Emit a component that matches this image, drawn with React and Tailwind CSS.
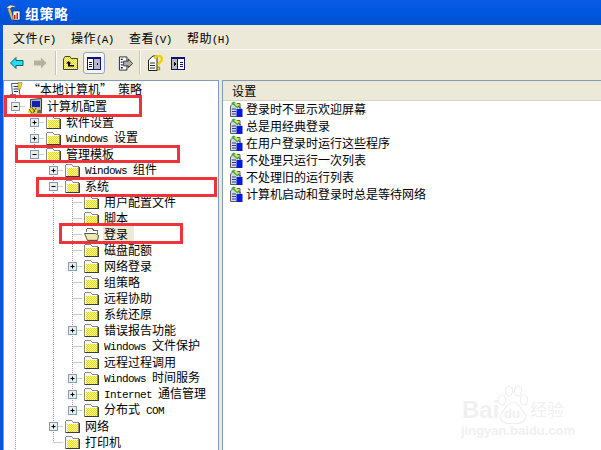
import React from "react";

const FONT = '"Noto Sans CJK SC", "Liberation Sans", sans-serif';

function T({ s }) {
  const parts = s.match(/[\x00-\x7f]+|[^\x00-\x7f]+/g) || [];
  return parts.map((p, i) =>
    /^[\x00-\x7f]/.test(p) ? (
      <span key={i} className="font-['Liberation_Mono',monospace] text-[11px] leading-[14px] tracking-[-0.6px] whitespace-pre">{p}</span>
    ) : (
      <span key={i} className="leading-[14px]">{p}</span>
    )
  );
}

function Dither() {
  return (
    <defs>
      <pattern id="dith" width="2" height="2" patternUnits="userSpaceOnUse">
        <rect width="2" height="2" fill="#fffbb0" />
        <rect width="1" height="1" fill="#f0dc00" />
        <rect x="1" y="1" width="1" height="1" fill="#f0dc00" />
      </pattern>
    </defs>
  );
}

function Folder({ open }) {
  if (open)
    return (
      <svg width="16" height="16" viewBox="0 0 16 16" shapeRendering="crispEdges" className="shrink-0 block">
        <Dither />
        <path d="M2.5 5.5 V3.5 L3.5 2.5 H8.5 L9.5 4.5 H13.5 V8" fill="#fff" stroke="#6a6a60" />
        <path d="M0.5 7.5 H11.5 L14.5 9.5 L13.5 14.5 H3.5 Z" fill="#efe9b0" stroke="#55554c" shapeRendering="auto" />
        <path d="M4 13 H13" stroke="#d8d0a0" />
      </svg>
    );
  return (
    <svg width="15" height="16" viewBox="0 0 15 16" shapeRendering="crispEdges" className="shrink-0 block">
      <Dither />
      <path d="M0.5 14.5 V3.5 L1.5 2.5 H6.5 L7.5 3.5 L8.5 4.5 H13.5 V14.5 Z" fill="#fbfaf2" stroke="#8a8a80" />
      <rect x="2" y="6" width="11" height="8" fill="url(#dith)" />
      <path d="M1 14.5 H14.5 V5" fill="none" stroke="#3c3c36" />
    </svg>
  );
}

function PolicyRoot() {
  return (
    <svg width="16" height="16" viewBox="0 0 16 16" className="shrink-0 block">
      <path d="M3.5 1.5 H11.5 V11.5 L13 14.5 H6 L4.5 12 Z" fill="#fff" stroke="#555" />
      <path d="M5.5 4.5 H10 M5.5 7 H10 M6 9.5 H10" stroke="#1a2fa0" />
      <path d="M10 0.5 L14 0.5 L12.5 7 L10 8 Z" fill="#f2d820" stroke="#776" strokeWidth=".6" />
      <path d="M2 12.5 H8" stroke="#777" />
    </svg>
  );
}

function Computer() {
  return (
    <svg width="16" height="16" viewBox="0 0 16 16" className="shrink-0 block">
      <path d="M3.5 1.5 L14.5 0.5 V13.5 H3.5 Z" fill="#b4b4ac" stroke="#3c3c3c" />
      <rect x="5" y="3" width="8" height="6" fill="#0c20b8" />
      <rect x="3" y="12" width="12" height="3.5" fill="#66665e" />
      <path d="M1 14 L3 9 L5 12 L7 8.5 L9 12 L11 10 L10 15 H2 Z" fill="#f2e000" />
      <path d="M2 11 L5 15 M5 9.5 L8 14 M9 10 L6 15" stroke="#2a2a2a" strokeWidth=".8" />
    </svg>
  );
}

function Setting() {
  return (
    <svg width="16" height="17" viewBox="0 0 16 17" className="shrink-0 block">
      <path d="M2.5 5 L5 2.5 H12 V15.5 H2.5 Z" fill="#d8d8d4" stroke="#5c5c5c" />
      <path d="M3 2 L6 0.5 L12 5 L9.5 7.5 Z" fill="#35ae55" />
      <path d="M6 2.5 L8 1.5 L11 4.5 L9 5.5 Z" fill="#f2e24a" />
      <path d="M11 5.5 L13 7.5" stroke="#333" />
      <path d="M4 8 H8 M4 10.5 H8 M4 13 H8" stroke="#2038a8" strokeWidth="1.2" />
      <rect x="8.5" y="8" width="6" height="8" fill="#0818dc" />
    </svg>
  );
}

const GUIDES = [
  [1, 99],
  [2, 4],
  [5, 22],
  [7, 20],
];

const ROWS = [
  { c: -1, icon: "root", t: "“本地计算机” 策略" },
  { c: 0, exp: "-", icon: "pc", t: "计算机配置" },
  { c: 1, exp: "+", t: "软件设置" },
  { c: 1, exp: "+", t: "Windows 设置" },
  { c: 1, exp: "-", t: "管理模板", last: true },
  { c: 2, exp: "+", t: "Windows 组件" },
  { c: 2, exp: "-", t: "系统" },
  { c: 3, t: "用户配置文件" },
  { c: 3, t: "脚本" },
  { c: 3, t: "登录", open: true, sel: true },
  { c: 3, t: "磁盘配额" },
  { c: 3, exp: "+", t: "网络登录" },
  { c: 3, t: "组策略" },
  { c: 3, t: "远程协助" },
  { c: 3, t: "系统还原" },
  { c: 3, exp: "+", t: "错误报告功能" },
  { c: 3, t: "Windows 文件保护" },
  { c: 3, t: "远程过程调用" },
  { c: 3, exp: "+", t: "Windows 时间服务" },
  { c: 3, exp: "+", t: "Internet 通信管理" },
  { c: 3, exp: "+", t: "分布式 COM", last: true },
  { c: 2, exp: "+", t: "网络" },
  { c: 2, t: "打印机", last: true },
];

function Cell({ kind, exp, last }) {
  const dot = { stroke: "#9a9a9a", strokeDasharray: "1 1", fill: "none" };
  return (
    <svg width="19" height="16" viewBox="0 0 19 16" className="shrink-0 block">
      {kind === "v" && <path d="M9.5 0 V16" {...dot} />}
      {kind === "c" && (
        <>
          <path d={last ? "M9.5 0 V8" : "M9.5 0 V16"} {...dot} />
          <path d="M9.5 8.5 H19" {...dot} />
          {exp && (
            <>
              <rect x="5.5" y="4.5" width="8" height="8" fill="#eeece6" stroke="#7f9db9" />
              <path d="M7.5 8.5 H11.5" stroke="#000" />
              {exp === "+" && <path d="M9.5 6.5 V10.5" stroke="#000" />}
            </>
          )}
        </>
      )}
    </svg>
  );
}

function TreeRow({ r, i }) {
  const cells = [];
  for (let k = 0; k <= r.c; k++) {
    if (k === r.c) cells.push(<Cell key={k} kind="c" exp={r.exp} last={r.last} />);
    else cells.push(<Cell key={k} kind={i >= GUIDES[k][0] && i <= GUIDES[k][1] ? "v" : ""} />);
  }
  return (
    <div className="flex items-center h-[16px] whitespace-nowrap">
      {cells}
      <div className="w-[19px] h-[16px] shrink-0 flex items-start justify-center">
        {r.icon === "root" ? <PolicyRoot /> : r.icon === "pc" ? <Computer /> : <Folder open={r.open} />}
      </div>
      <div className={"ml-[2px] px-[1px] h-[16px] pb-[1px] flex items-center text-[12px] leading-[14px] " + (r.sel ? "bg-[#ece9d8] pr-[6px]" : "")}>
        <div className="leading-[14px]"><T s={r.t} /></div>
      </div>
    </div>
  );
}

const SETTINGS = [
  "登录时不显示欢迎屏幕",
  "总是用经典登录",
  "在用户登录时运行这些程序",
  "不处理只运行一次列表",
  "不处理旧的运行列表",
  "计算机启动和登录时总是等待网络",
];

function Sep() {
  return <div className="w-[1px] h-[24px] bg-[#c8c5b4] border-r border-white box-content" />;
}

function PaneIcon({ flip }) {
  return (
    <svg width="14" height="13" viewBox="0 0 14 13" className="block" shapeRendering="crispEdges">
      <rect x="0.5" y="0.5" width="13" height="12" fill="#fff" stroke="#10107a" />
      <rect x="0" y="0" width="14" height="2" fill="#10107a" />
      {flip ? (
        <>
          <rect x="1" y="2" width="6" height="10" fill="#b8b8c4" />
          <path d="M3 5 L5 7 L3 9 Z" fill="#000" />
          <path d="M9 5 H12 M9 7 H12 M9 9 H12" stroke="#10107a" />
        </>
      ) : (
        <>
          <path d="M2 5 H5 M2 7 H5 M2 9 H5" stroke="#10107a" />
          <rect x="7" y="2" width="6" height="10" fill="#b8b8c4" />
          <path d="M11 5 L9 7 L11 9 Z" fill="#000" />
        </>
      )}
      <path d="M6.5 2 V12" stroke="#10107a" />
    </svg>
  );
}

function Box({ className }) {
  return <div className={"absolute border-[3px] border-[#f0333a] " + className} />;
}

export default function App() {
  return (
    <div style={{ fontFamily: FONT }} className="relative w-[601px] h-[450px] overflow-hidden flex flex-col text-[12px] text-black bg-[#ece9d8]">
      {/* Title bar */}
      <div className="h-[25px] shrink-0 flex items-center pl-[5px] bg-gradient-to-b from-[#0a5ce6] via-[#0056e0] to-[#0250d0]">
        <svg width="16" height="17" viewBox="0 0 16 17" className="shrink-0 block">
          <path d="M1 4 L5 1 L9 1.5 L11 3.5 L7 3 L5 5 Z" fill="#e8e8e0" stroke="#333" strokeWidth=".5" />
          <path d="M4 5 L8 16" stroke="#e8c040" strokeWidth="2.2" />
          <rect x="8" y="7" width="7" height="9" fill="#f4f4f4" stroke="#222" strokeWidth=".6" />
          <rect x="9" y="11" width="1.5" height="4" fill="#c02020" />
          <rect x="11.5" y="9" width="1.5" height="6" fill="#c02020" />
        </svg>
        <span className="ml-[4px] text-white font-bold text-[14px] leading-none tracking-[0.5px]">组策略</span>
      </div>

      <div className="flex-1 flex min-h-0 border-l-[3px] border-[#0855dd]">
        <div className="flex-1 flex flex-col min-w-0">
          {/* Menu */}
          <div className="h-[24px] shrink-0 flex items-center pt-[3px] pl-[10px] gap-[18px] bg-[#ece9d8] text-[12px]">
            {["文件(F)", "操作(A)", "查看(V)", "帮助(H)"].map((m) => (
              <span key={m} className="w-[40px] whitespace-nowrap leading-[14px] tracking-[0.4px]"><T s={m} /></span>
            ))}
          </div>

          {/* Toolbar */}
          <div className="h-[31px] shrink-0 flex items-center pb-[4px] bg-[#ece9d8] border-t border-[#f8f6ee]">
            <svg width="14" height="12" viewBox="0 0 14 12" className="ml-[7px] block">
              <path d="M0.5 6 L6 0.5 V3.5 H13 V8.5 H6 V11.5 Z" fill="#20e0f0" stroke="#106070" />
            </svg>
            <svg width="14" height="12" viewBox="0 0 14 12" className="ml-[9px] block">
              <path d="M13.5 6 L8 0.5 V3.5 H1 V8.5 H8 V11.5 Z" fill="#b4b1a0" />
            </svg>
            <div className="ml-[8px]"><Sep /></div>
            <svg width="15" height="14" viewBox="0 0 15 14" className="ml-[6px] block">
              <Dither />
              <path d="M0.5 3 L2 0.5 H7 L8 2.5 H14.5 V13.5 H0.5 Z" fill="url(#dith)" stroke="#444" />
              <path d="M5.5 5 L3 7.5 H5 V10.5 H11 V9 H7 V7.5 H8.5 Z" fill="#000" />
            </svg>
            <div className="ml-[5px] w-[22px] h-[22px] rounded-[3px] border border-[#8ea6c6] bg-[#f6f5ee] flex items-center justify-center">
              <PaneIcon flip={false} />
            </div>
            <svg width="15" height="15" viewBox="0 0 16 15" className="ml-[13px] block">
              <path d="M1.5 0.5 H9.5 V14.5 H1.5 Z" fill="#fff" stroke="#222" />
              <path d="M3 3 H5 M3 6 H5 M3 9 H5 M3 12 H5" stroke="#10107a" strokeWidth="1.4" />
              <path d="M6 5 H11 V2.5 L15.5 7.5 L11 12 V10 H6 Z" fill="#b0b0a8" stroke="#333" />
            </svg>
            <div className="ml-[6px]"><Sep /></div>
            <svg width="15" height="16" viewBox="0 0 15 16" className="ml-[7px] block">
              <path d="M0.5 5 L5 1 H9 V15.5 H0.5 Z" fill="#fff" stroke="#222" />
              <path d="M2 8 H7 M2 10.5 H7 M2 13 H7" stroke="#333" />
              <path d="M7 4 C7 0 14 0 14 4 C14 7 10.5 6.5 10.5 10" fill="none" stroke="#f2d000" strokeWidth="2.4" />
              <rect x="9.3" y="12" width="2.6" height="3" fill="#f2d000" stroke="#333" strokeWidth=".4" />
            </svg>
            <div className="ml-[8px]"><PaneIcon flip /></div>
          </div>

          {/* Panes */}
          <div className="flex-1 flex min-h-0 bg-[#ece9d8]">
            <div className="w-[216px] shrink-0 bg-white border-t border-r border-l border-[#7f9db9] pl-[2px] pt-[1px] overflow-hidden">
              {ROWS.map((r, i) => (
                <TreeRow key={i} r={r} i={i} />
              ))}
            </div>
            <div className="flex-1 ml-[3px] bg-white border-t border-l border-[#7f9db9] min-w-0">
              <div className="h-[20px] bg-[#ece9d8] border-b border-[#d8d4c4] flex items-center pl-[9px] leading-[14px]">
                <span className="tracking-[0.2px]">设置</span>
              </div>
              <div className="pl-[5px]">
                {SETTINGS.map((s) => (
                  <div key={s} className="h-[17px] flex items-center gap-[2px] whitespace-nowrap leading-[14px] text-[12px]">
                    <Setting />
                    <span className="pb-[1px]">{s}</span>
                  </div>
                ))}
              </div>
            </div>
          </div>
        </div>
      </div>

      {/* Red annotations */}
      <Box className="left-[4px] top-[95px] w-[138px] h-[22px]" />
      <Box className="left-[15px] top-[145px] w-[165px] h-[18px]" />
      <Box className="left-[36px] top-[177px] w-[181px] h-[20px]" />
      <Box className="left-[59px] top-[223px] w-[124px] h-[21px]" />

      {/* Watermark */}
      <div className="absolute left-[460px] top-[385px] w-[110px] text-[#f0f0f0] leading-none">
        <svg width="34" height="42" viewBox="0 0 34 42" className="absolute left-[36px] top-0" fill="none" stroke="#eeeeee" strokeWidth="1.2">
          <ellipse cx="6" cy="15" rx="3.5" ry="5" />
          <ellipse cx="13" cy="6" rx="3.5" ry="5" />
          <ellipse cx="22" cy="6" rx="3.5" ry="5" />
          <ellipse cx="28" cy="15" rx="3.5" ry="5" />
          <path d="M17 17 C12 17 9 24 5 29 C2 36 10 40 17 38 C24 40 32 36 29 29 C25 24 22 17 17 17 Z" />
        </svg>
        <div className="absolute left-[2px] top-[13px] whitespace-nowrap font-['Liberation_Sans',sans-serif] font-bold text-[24px]">Bai</div>
        <div className="absolute left-[70px] top-[15px] whitespace-nowrap text-[17px]">经验</div>
        <div className="absolute left-[44px] top-[22px] text-[13px] font-bold font-['Liberation_Sans',sans-serif]">du</div>
        <div className="absolute left-[1px] top-[39px] font-['Liberation_Sans',sans-serif] font-bold text-[13px] whitespace-nowrap">jingyan.baidu.com</div>
      </div>
    </div>
  );
}
